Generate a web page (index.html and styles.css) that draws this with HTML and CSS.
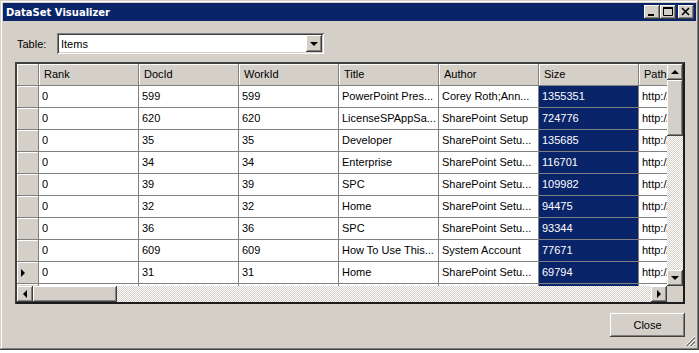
FILE: index.html
```html
<!DOCTYPE html>
<html lang="en">
<head>
    <meta charset="UTF-8">
    <title>DataSet Visualizer</title>
    <link rel="stylesheet" href="styles.css">
</head>
<body>
    <div class="window">
        <div class="titlebar">
            <span class="caption">DataSet Visualizer</span>
            <div class="tb-buttons">
                <div class="tb-btn"><svg width="16" height="14" viewBox="0 0 16 14"><rect x="4" y="9" width="6" height="2" fill="#000"/></svg></div>
                <div class="tb-btn"><svg width="16" height="14" viewBox="0 0 16 14"><path d="M3.5 2.5h9v8h-9z" fill="none" stroke="#000"/><rect x="3" y="2" width="10" height="2" fill="#000"/></svg></div>
                <div class="tb-btn close"><svg width="16" height="14" viewBox="0 0 16 14"><path d="M4 3l7 7M11 3l-7 7" stroke="#000" stroke-width="1.6"/></svg></div>
            </div>
        </div>

        <div class="body">
            <div class="picker">
                <span class="label">Table:</span>
                <div class="combo">
                    <span class="combo-text">Items</span>
                    <div class="btn combo-btn"><span class="arr down"></span></div>
                </div>
            </div>

            <div class="grid">
                <div class="view">
                    <div class="row head">
                        <div class="rh"></div>
                        <div class="cell">Rank</div>
                        <div class="cell">DocId</div>
                        <div class="cell">WorkId</div>
                        <div class="cell">Title</div>
                        <div class="cell">Author</div>
                        <div class="cell">Size</div>
                        <div class="cell">Path</div>
                    </div>
                    <div class="row">
                        <div class="rh"></div>
                        <div class="cell">0</div><div class="cell">599</div><div class="cell">599</div>
                        <div class="cell">PowerPoint Pres...</div><div class="cell">Corey Roth;Ann...</div>
                        <div class="cell sel">1355351</div><div class="cell">http://</div>
                    </div>
                    <div class="row">
                        <div class="rh"></div>
                        <div class="cell">0</div><div class="cell">620</div><div class="cell">620</div>
                        <div class="cell">LicenseSPAppSa...</div><div class="cell">SharePoint Setup</div>
                        <div class="cell sel">724776</div><div class="cell">http://</div>
                    </div>
                    <div class="row">
                        <div class="rh"></div>
                        <div class="cell">0</div><div class="cell">35</div><div class="cell">35</div>
                        <div class="cell">Developer</div><div class="cell">SharePoint Setu...</div>
                        <div class="cell sel">135685</div><div class="cell">http://</div>
                    </div>
                    <div class="row">
                        <div class="rh"></div>
                        <div class="cell">0</div><div class="cell">34</div><div class="cell">34</div>
                        <div class="cell">Enterprise</div><div class="cell">SharePoint Setu...</div>
                        <div class="cell sel">116701</div><div class="cell">http://</div>
                    </div>
                    <div class="row">
                        <div class="rh"></div>
                        <div class="cell">0</div><div class="cell">39</div><div class="cell">39</div>
                        <div class="cell">SPC</div><div class="cell">SharePoint Setu...</div>
                        <div class="cell sel">109982</div><div class="cell">http://</div>
                    </div>
                    <div class="row">
                        <div class="rh"></div>
                        <div class="cell">0</div><div class="cell">32</div><div class="cell">32</div>
                        <div class="cell">Home</div><div class="cell">SharePoint Setu...</div>
                        <div class="cell sel">94475</div><div class="cell">http://</div>
                    </div>
                    <div class="row">
                        <div class="rh"></div>
                        <div class="cell">0</div><div class="cell">36</div><div class="cell">36</div>
                        <div class="cell">SPC</div><div class="cell">SharePoint Setu...</div>
                        <div class="cell sel">93344</div><div class="cell">http://</div>
                    </div>
                    <div class="row">
                        <div class="rh"></div>
                        <div class="cell">0</div><div class="cell">609</div><div class="cell">609</div>
                        <div class="cell">How To Use This...</div><div class="cell">System Account</div>
                        <div class="cell sel">77671</div><div class="cell">http://</div>
                    </div>
                    <div class="row">
                        <div class="rh current"><span class="arr right"></span></div>
                        <div class="cell">0</div><div class="cell">31</div><div class="cell">31</div>
                        <div class="cell">Home</div><div class="cell">SharePoint Setu...</div>
                        <div class="cell sel">69794</div><div class="cell">http://</div>
                    </div>
                    <div class="row">
                        <div class="rh"></div>
                        <div class="cell">0</div><div class="cell">33</div><div class="cell">33</div>
                        <div class="cell">Team Site</div><div class="cell">SharePoint Setu...</div>
                        <div class="cell sel">61232</div><div class="cell">http://</div>
                    </div>
                </div>

                <div class="vscroll">
                    <div class="btn sb-btn"><span class="arr up"></span></div>
                    <div class="btn vthumb"></div>
                    <div class="track"></div>
                    <div class="btn sb-btn"><span class="arr down"></span></div>
                </div>
                <div class="hscroll">
                    <div class="btn sb-btn"><span class="arr left"></span></div>
                    <div class="btn hthumb"></div>
                    <div class="track"></div>
                    <div class="btn sb-btn"><span class="arr right"></span></div>
                </div>
                <div class="corner"></div>
            </div>

            <div class="footer">
                <div class="btn push">Close</div>
            </div>
        </div>

        <svg class="grip" width="12" height="12" viewBox="0 0 12 12">
            <path d="M11 1L1 11M11 5L5 11M11 9L9 11" stroke="#fff" stroke-width="1"/>
            <path d="M11 2L2 11M11 3L3 11M11 6L6 11M11 7L7 11M11 10L10 11" stroke="#808080" stroke-width="1"/>
        </svg>
    </div>
</body>
</html>
```

FILE: styles.css
```css
*{
    margin: 0;
    padding: 0;
}
body{
    background: #fff;
    font: 11px "Liberation Sans", Arial, sans-serif;
    color: #000;
}
.window{
    position: relative;
    width: 699px;
    height: 350px;
    box-sizing: border-box;
    padding: 3px;
    background: #d4d0c8;
    box-shadow: inset -1px -1px #404040, inset 1px 1px #d4d0c8, inset -2px -2px #808080, inset 2px 2px #fff;
    display: flex;
    flex-direction: column;
}
.titlebar{
    height: 18px;
    background: #0a246a;
    color: #fff;
    display: flex;
    align-items: center;
    justify-content: space-between;
    padding: 0 2px 0 3px;
}
.caption{
    font: bold 10px "DejaVu Sans", sans-serif;
}
.tb-buttons{
    display: flex;
}
.btn{
    background: #d4d0c8;
    box-shadow: inset -1px -1px #404040, inset 1px 1px #fff, inset -2px -2px #808080, inset 2px 2px #d4d0c8;
    box-sizing: border-box;
}
.tb-btn{
    width: 16px;
    height: 14px;
    background: #d4d0c8;
    box-shadow: inset -1px -1px #404040, inset 1px 1px #fff, inset -2px -2px #808080, inset 2px 2px #d4d0c8;
}
.tb-btn svg{
    display: block;
}
.tb-btn.close{
    margin-left: 2px;
}

.body{
    flex: 1;
    display: flex;
    flex-direction: column;
    padding: 12px 11px 0 12px;
}
.picker{
    display: flex;
    align-items: center;
    padding-left: 2px;
}
.label{
    width: 40px;
}
.combo{
    width: 267px;
    height: 21px;
    box-sizing: border-box;
    background: #fff;
    box-shadow: inset 1px 1px #808080, inset -1px -1px #fff, inset 2px 2px #404040, inset -2px -2px #d4d0c8;
    display: flex;
    align-items: center;
    justify-content: space-between;
    padding: 2px;
}
.combo-text{
    padding-left: 2px;
}
.combo-btn{
    width: 16px;
    height: 17px;
    display: flex;
    align-items: center;
    justify-content: center;
}

.arr{
    width: 0;
    height: 0;
    display: block;
}
.arr.down{
    border-left: 4px solid transparent;
    border-right: 4px solid transparent;
    border-top: 4px solid #000;
}
.arr.up{
    border-left: 4px solid transparent;
    border-right: 4px solid transparent;
    border-bottom: 4px solid #000;
}
.arr.left{
    border-top: 4px solid transparent;
    border-bottom: 4px solid transparent;
    border-right: 4px solid #000;
}
.arr.right{
    border-top: 4px solid transparent;
    border-bottom: 4px solid transparent;
    border-left: 4px solid #000;
}

.grid{
    margin-top: 8px;
    width: 670px;
    height: 242px;
    box-sizing: border-box;
    border: 2px solid #404040;
    border-color: #404040 #1c1c1c #1c1c1c #404040;
    display: grid;
    grid-template-columns: 1fr 16px;
    grid-template-rows: 1fr 16px;
}
.view{
    overflow: hidden;
    background: #808080;
}
.row{
    display: flex;
    height: 22px;
}
.rh{
    width: 22px;
    flex: none;
    box-sizing: border-box;
    background: #d4d0c8;
    border-right: 1px solid #808080;
    border-bottom: 1px solid #808080;
    box-shadow: inset 1px 1px #fff;
    display: flex;
    align-items: center;
    padding-left: 4px;
}
.cell{
    width: 100px;
    flex: none;
    box-sizing: border-box;
    padding-left: 3px;
    line-height: 21px;
    background: #fff;
    border-right: 1px solid #808080;
    border-bottom: 1px solid #808080;
    white-space: nowrap;
    overflow: hidden;
}
.head .cell{
    background: #d4d0c8;
    padding-left: 5px;
    box-shadow: inset 1px 1px #fff;
}
.cell.sel{
    background: #0a246a;
    color: #fff;
}

.track{
    flex: 1;
    background: repeating-conic-gradient(#fff 0 25%, #d4d0c8 0 50%) 0 0/2px 2px;
}
.vscroll{
    display: flex;
    flex-direction: column;
}
.hscroll{
    display: flex;
}
.sb-btn{
    width: 16px;
    height: 16px;
    flex: none;
    display: flex;
    align-items: center;
    justify-content: center;
}
.vthumb{
    height: 56px;
    flex: none;
}
.hthumb{
    width: 84px;
    flex: none;
}
.corner{
    background: #d4d0c8;
}

.footer{
    margin-top: 9px;
    display: flex;
    justify-content: flex-end;
}
.push{
    width: 75px;
    height: 24px;
    display: flex;
    align-items: center;
    justify-content: center;
}
.grip{
    position: absolute;
    right: 3px;
    bottom: 3px;
}
```
